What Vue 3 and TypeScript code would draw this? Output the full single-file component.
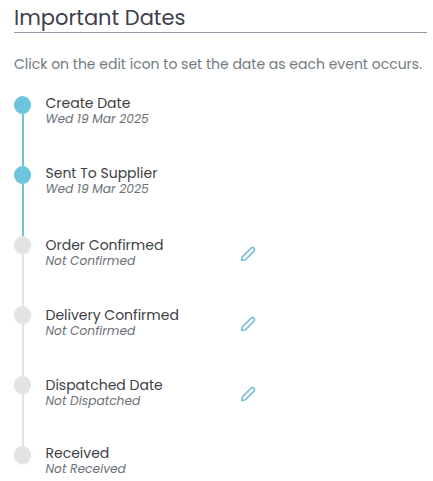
<script setup lang="ts">
interface Milestone {
  key: string
  title: string
  status: string
  done: boolean
  editable: boolean
}

const milestones: Milestone[] = [
  { key: 'create', title: 'Create Date', status: 'Wed 19 Mar 2025', done: true, editable: false },
  { key: 'sent', title: 'Sent To Supplier', status: 'Wed 19 Mar 2025', done: true, editable: false },
  { key: 'order', title: 'Order Confirmed', status: 'Not Confirmed', done: false, editable: true },
  { key: 'delivery', title: 'Delivery Confirmed', status: 'Not Confirmed', done: false, editable: true },
  { key: 'dispatched', title: 'Dispatched Date', status: 'Not Dispatched', done: false, editable: true },
  { key: 'received', title: 'Received', status: 'Not Received', done: false, editable: false },
]
</script>

<template>
  <section class="panel">
    <h2 class="heading">Important Dates</h2>
    <p class="hint">Click on the edit icon to set the date as each event occurs.</p>
    <ol class="timeline">
      <li
        v-for="item in milestones"
        :key="item.key"
        class="event"
        :class="[item.key, { done: item.done, editable: item.editable }]"
      >
        <div class="track">
          <span class="dot"></span>
          <span class="line"></span>
        </div>
        <div class="details">
          <div class="title">{{ item.title }}</div>
          <div class="status">{{ item.status }}</div>
        </div>
        <button v-if="item.editable" class="edit" type="button" aria-label="Edit date">
          <svg width="16" height="16" viewBox="0 0 16 16">
            <path d="M1.6 14.4 2.2 10.9 10.9 2.2Q12.4.7 13.9 2.2 15.4 3.7 13.9 5.2L5.2 13.9Z" />
          </svg>
        </button>
      </li>
    </ol>
  </section>
</template>

<style>
body {
  background: #fff;
}
</style>

<style scoped>
.panel {
  box-sizing: border-box;
  width: 433px;
  height: 481px;
  padding: 0 6px 0 14px;
  overflow: hidden;
  font-family: Poppins, Inter, 'Liberation Sans', sans-serif;
  white-space: nowrap;
}

.heading {
  box-sizing: border-box;
  height: 33px;
  margin: 0;
  padding-top: 3px;
  border-bottom: 1px solid #9299a8;
  color: #3d3f4e;
  font-size: 21px;
  font-weight: 400;
  line-height: 30px;
}

.hint {
  height: 20px;
  margin: 21px 0 22px;
  color: #727a80;
  font-size: 14px;
  line-height: 20px;
}

.timeline {
  margin: 0;
  padding: 0;
  list-style: none;
}

.event {
  display: flex;
  height: 70px;
}

.track {
  display: flex;
  flex-direction: column;
  align-items: center;
  width: 17px;
  margin-right: 14.5px;
}

.dot {
  flex: none;
  width: 17px;
  height: 18px;
  border-radius: 50%;
  background: #e3e3e5;
  box-shadow: 0 1px 2px rgba(0, 0, 0, 0.06);
}

.line {
  flex: 1;
  width: 2px;
  margin-left: 1px;
  background: #e3e3e5;
}

.done .dot,
.done .line {
  background: #6cc5dd;
}

.received .line {
  display: none;
}

.details {
  width: 194.5px;
}

.editable .details {
  padding-top: 2px;
}

.title {
  height: 15px;
  color: #3e4044;
  font-size: 14px;
  line-height: 15px;
}

.status {
  height: 16px;
  color: #6c7278;
  font-size: 12.25px;
  font-style: italic;
  line-height: 16px;
}

.edit {
  width: 16px;
  height: 16px;
  margin: 10px 0 0;
  padding: 0;
  border: 0;
  background: none;
}

.edit svg {
  display: block;
  fill: none;
  stroke: #65b7d3;
  stroke-width: 1.4;
  stroke-linejoin: round;
}
</style>
